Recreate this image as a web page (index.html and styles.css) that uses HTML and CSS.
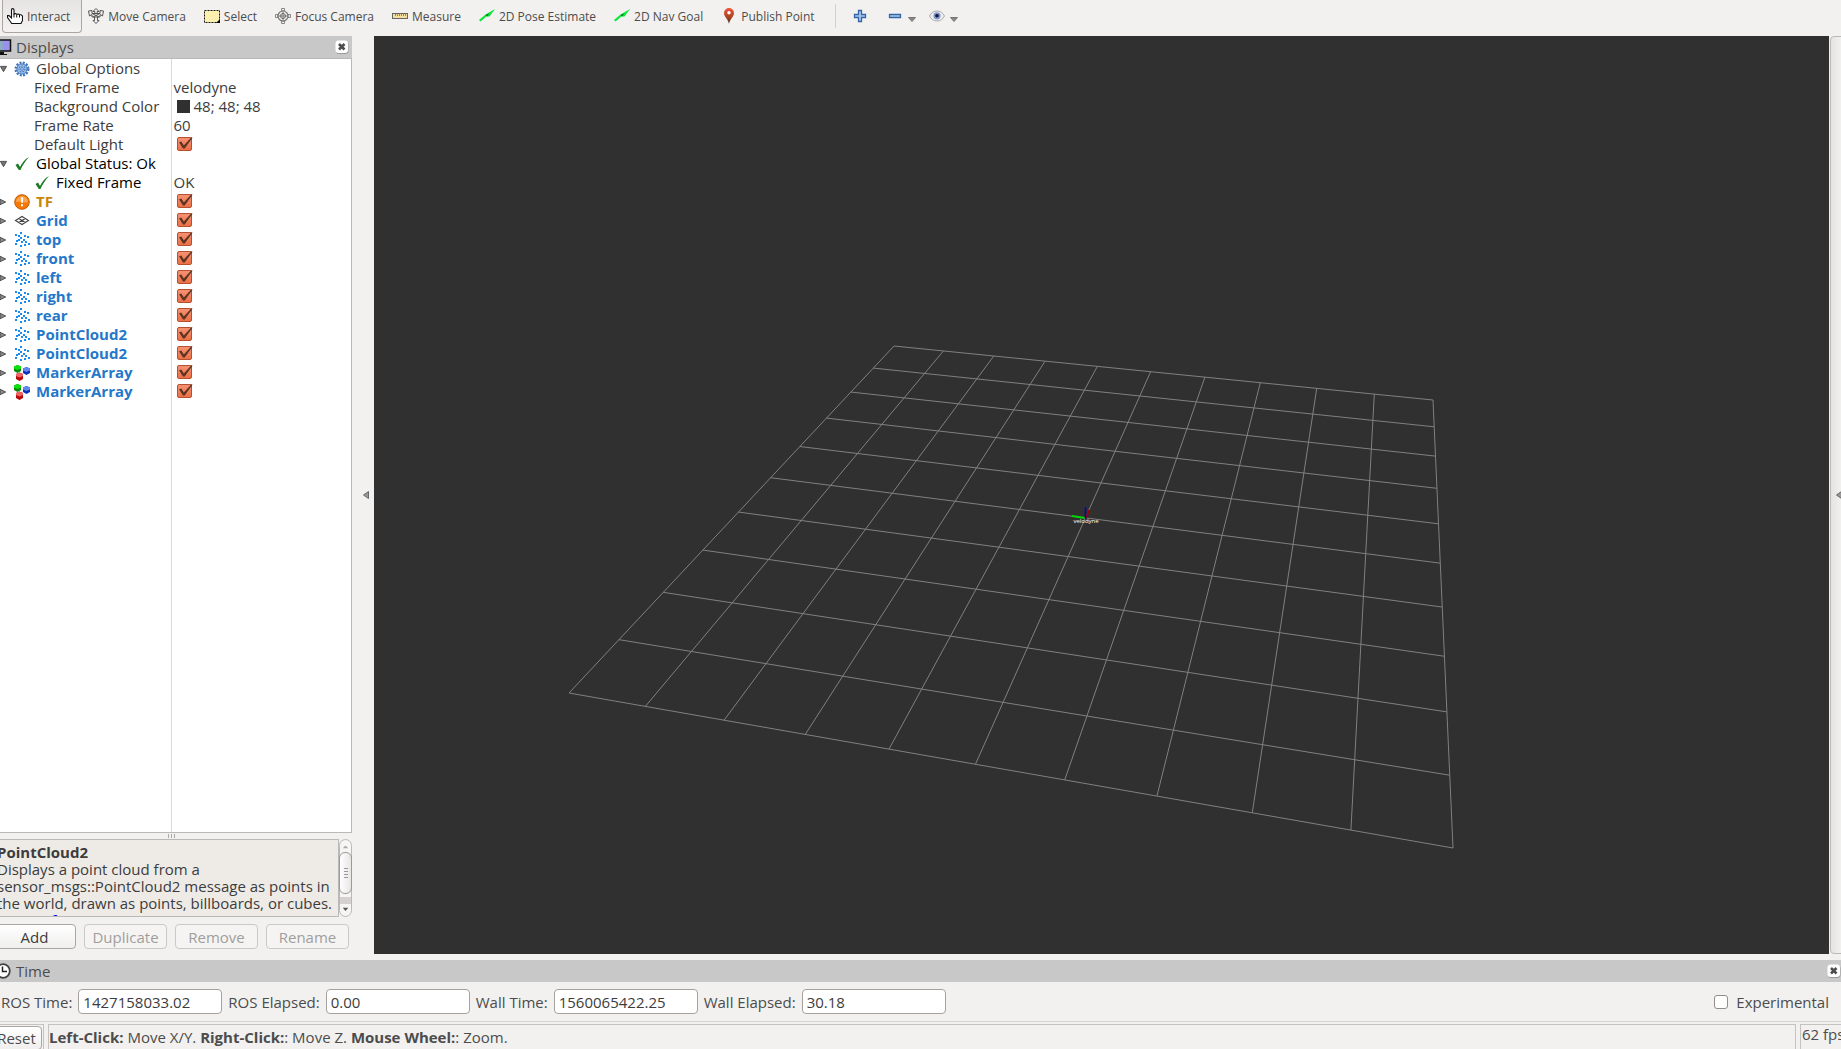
FILE: index.html
```html
<!DOCTYPE html>
<html lang="en">
<head>
    <meta charset="UTF-8">
    <meta name="viewport" content="width=device-width, initial-scale=1.0">
    <title>RViz</title>
    <link rel="stylesheet" href="styles.css">
</head>
<body>
    <!-- Shared icons -->
    <svg class="sprite" aria-hidden="true">
        <symbol id="gear" viewBox="0 0 16 16">
            <circle cx="8" cy="8" r="6" fill="none" stroke="#3f74bb" stroke-width="3" stroke-dasharray="1.9 1.24"/>
            <circle cx="8" cy="8" r="5" fill="#a6c5ec" stroke="#4a7fc4"/>
            <circle cx="8" cy="8" r="3" fill="none" stroke="#3f74bb" stroke-width="1.2" stroke-dasharray="1.6 1"/>
            <circle cx="8" cy="8" r="1.3" fill="#fff" stroke="#3f74bb"/>
        </symbol>
        <symbol id="tick" viewBox="0 0 16 16">
            <path d="M1.500 9L4 7.500l2 3.500C8 7 11 3 15 1 11.500 5 8.500 9 6.500 14H4.800z" fill="#1d7a24"/>
        </symbol>
        <symbol id="warn" viewBox="0 0 16 16">
            <circle cx="8" cy="8" r="7.300" fill="#f57900" stroke="#c65a00"/>
            <path d="M2 8a6 6 0 0 1 12 0C10 9.500 6 7 2 8z" fill="#fba550"/>
            <path d="M7 3.500h2.200L8.800 9H7.400zM7 10.300h2v2H7z" fill="#fff"/>
        </symbol>
        <symbol id="grid" viewBox="0 0 16 16">
            <path d="M1.500 7.500L8 3.500l6.500 4-6.500 4zM4.700 5.500l6.600 4M11.300 5.500l-6.600 4" fill="none" stroke="#444" stroke-width="1.100"/>
        </symbol>
        <symbol id="cloud" viewBox="0 0 16 16">
            <path d="M6 0h2v2H6zM1 2h2v2H1zM4 3h2v2H4zM10 3h2v2h-2zM13 4h2v2h-2zM6 5h2v2H6zM2 8h2v2H2zM4 7h2v2H4zM9 7h2v2H9zM7 9h2v2H7zM11 9h2v2h-2zM14 11h2v2h-2zM1 11h2v2H1zM6 13h2v2H6zM10 12h2v2h-2z" fill="#1a8cf0" shape-rendering="crispEdges"/>
        </symbol>
        <symbol id="markers" viewBox="0 0 16 16">
            <path d="M0 1.500L3.500 0 7 1.500v4.500L3.500 8 0 6z" fill="#078a07"/><path d="M0 1.500L3.500 0 7 1.500v2L3.500 5 0 3.500z" fill="#0be30b"/>
            <path d="M9 3.500L12.500 2 16 3.500V8l-3.500 2L9 8z" fill="#0b2fb5"/><path d="M9 3.500L12.500 2 16 3.500v2L12.500 7 9 5.500z" fill="#6286f5"/>
            <path d="M2 9L5.500 7.500 9 9v5l-3.500 2L2 14z" fill="#b80808"/><path d="M2 9L5.500 7.500 9 9v2l-3.500 1.500L2 11z" fill="#ef6464"/>
        </symbol>
        <symbol id="arrow" viewBox="0 0 16 16">
            <path d="M0 12L6.500 6.500 16 1l-5.500 7.500H7.500L1.500 13.500z" fill="#0be83a"/>
            <path d="M6.500 7l3.500-1.500L8.500 8.500z" fill="#087a1e"/>
        </symbol>
        <symbol id="close" viewBox="0 0 14 14">
            <rect x="1" y="1.500" width="12.500" height="12.500" rx="3" fill="#999"/>
            <rect x=".5" y=".5" width="12.500" height="12.500" rx="3" fill="#fff"/>
            <path d="M4 4l5.500 5.500M9.500 4L4 9.500" stroke="#4c4c4c" stroke-width="2.600"/>
        </symbol>
        <symbol id="open" viewBox="0 0 8 8"><path d="M.5 1h7L4 7z" fill="#777" stroke="#444"/></symbol>
        <symbol id="drop" viewBox="0 0 8 8"><path d="M.5 2.500h7L4 6.500z" fill="#888" stroke="#777"/></symbol>
        <symbol id="shut" viewBox="0 0 8 8"><path d="M0 .8L6.500 4 0 7.200z" fill="#888" stroke="#444"/></symbol>
    </svg>

    <header class="toolbar">
        <button class="tool active">
            <svg class="icon" viewBox="0 0 16 16"><path d="M4.500 10V1.700Q4.500.6 5.700.6T7 1.700V6l1.500-.4 1.200.6 1.600-.2 1.200.7 1.500 0 1.500 1.300v4.500L14 15.500H4.700L3 13 .5 9.500V7.600L2 7.500z" fill="#fff" stroke="#111" stroke-width="1.100"/><path d="M7 6v3.500M9.700 6.500v3M12.500 7v2.500" stroke="#111"/></svg>
            Interact
        </button>
        <button class="tool">
            <svg class="icon" viewBox="0 0 16 16"><path d="M8 .5l3 3H9.200V6M8 .5l-3 3h1.800V6M.5 3l3.500-.5v3h8v-3l3.500.5-1 5-2.500-1.500V9H4V6.500L1.500 8zM8 15.500l-3-3h1.500V9M8 15.500l3-3H9.500V9M5 6l6 3M11 6L5 9" fill="none" stroke="#555"/></svg>
            Move Camera
        </button>
        <button class="tool">
            <svg class="icon" viewBox="0 0 16 16"><rect x=".5" y="2.500" width="15" height="12" fill="#fcf0ae" stroke="#111" stroke-dasharray="2 1"/><path d="M16 11v4h-4z" fill="#000"/></svg>
            Select
        </button>
        <button class="tool">
            <svg class="icon" viewBox="0 0 16 16"><path d="M6.500 3V.5h3V3M6.500 13v2.500h3V13M3 6.500H.5v3H3M13 6.500h2.500v3H13" fill="none" stroke="#888"/><circle cx="8" cy="8" r="5" fill="none" stroke="#777" stroke-width="1.200"/><path d="M8 2v12M2 8h12" stroke="#777"/><circle cx="8" cy="8" r="2.500" fill="none" stroke="#666"/></svg>
            Focus Camera
        </button>
        <button class="tool">
            <svg class="icon" viewBox="0 0 16 16"><rect x=".5" y="5.500" width="15" height="5" fill="#f3dfa0" stroke="#666"/><path d="M3.500 6v2M5.500 6v2M7.500 6v2M9.500 6v2M11.500 6v2M13.500 6v2" stroke="#888"/></svg>
            Measure
        </button>
        <button class="tool"><svg class="icon"><use href="#arrow"/></svg>2D Pose Estimate</button>
        <button class="tool"><svg class="icon"><use href="#arrow"/></svg>2D Nav Goal</button>
        <button class="tool">
            <svg class="icon" viewBox="0 0 16 16"><defs><linearGradient id="pin" x2="0" y2="1"><stop stop-color="#f0553a"/><stop offset=".6" stop-color="#a8421f"/><stop offset="1" stop-color="#3c2a18"/></linearGradient></defs><path d="M8 16C7.500 11.500 3 9 3 5a5 5 0 0 1 10 0c0 4-4.500 6.500-5 11z" fill="url(#pin)"/><circle cx="8" cy="4.800" r="1.700" fill="#fff"/></svg>
            Publish Point
        </button>
        <span class="separator"></span>
        <button class="tool small" aria-label="Add tool">
            <svg class="icon" viewBox="0 0 16 16"><path d="M6.500 2.500h3v4h4v3h-4v4h-3v-4h-4v-3h4z" fill="#a9c8ee" stroke="#3465a4" stroke-width="1.300"/></svg>
        </button>
        <button class="tool small" aria-label="Remove tool">
            <svg class="icon" viewBox="0 0 16 16"><path d="M2.500 6.500h11v3h-11z" fill="#a9c8ee" stroke="#3465a4" stroke-width="1.300"/></svg>
            <svg class="caret"><use href="#drop"/></svg>
        </button>
        <button class="tool small" aria-label="Visibility">
            <svg class="icon" viewBox="0 0 16 16"><path d="M.5 8Q3 3 8 3t7.500 5Q13 13 8 13T.5 8z" fill="#eee" stroke="#aaa"/><circle cx="8" cy="7.800" r="3.600" fill="#8095cf"/><circle cx="8" cy="7.800" r="1.800" fill="#14182c"/></svg>
            <svg class="caret"><use href="#drop"/></svg>
        </button>
    </header>

    <main class="workspace">
        <section class="displays">
            <div class="dock-title">
                <svg class="title-icon" viewBox="0 0 16 16"><defs><linearGradient id="screen"><stop offset=".3" stop-color="#76d58a"/><stop offset=".7" stop-color="#9a92e8"/></linearGradient></defs><rect x="-6" y="1" width="20.500" height="11" fill="url(#screen)" stroke="#111" stroke-width="1.500"/><path d="M3 13h5v2H3zM0 15h11v1H0z" fill="#111"/></svg>
                Displays
                <button class="close" aria-label="Close Displays"><svg><use href="#close"/></svg></button>
            </div>
            <div class="tree">
                <table>
                    <tbody>
                        <tr><td><div class="name"><svg class="twist"><use href="#open"/></svg><svg class="row-icon"><use href="#gear"/></svg>Global Options</div></td><td></td></tr>
                        <tr><td><div class="name prop">Fixed Frame</div></td><td>velodyne</td></tr>
                        <tr><td><div class="name prop">Background Color</div></td><td><span class="swatch"></span>48; 48; 48</td></tr>
                        <tr><td><div class="name prop">Frame Rate</div></td><td>60</td></tr>
                        <tr><td><div class="name prop"><label for="light">Default Light</label></div></td><td><input type="checkbox" class="check" id="light" checked></td></tr>
                        <tr><td><div class="name status"><svg class="twist"><use href="#open"/></svg><svg class="row-icon"><use href="#tick"/></svg>Global Status: Ok</div></td><td></td></tr>
                        <tr><td><div class="name status nested"><svg class="row-icon"><use href="#tick"/></svg>Fixed Frame</div></td><td>OK</td></tr>
                        <tr><td><div class="name display warning"><svg class="twist"><use href="#shut"/></svg><svg class="row-icon"><use href="#warn"/></svg><label for="d1">TF</label></div></td><td><input type="checkbox" class="check" id="d1" checked></td></tr>
                        <tr><td><div class="name display"><svg class="twist"><use href="#shut"/></svg><svg class="row-icon"><use href="#grid"/></svg><label for="d2">Grid</label></div></td><td><input type="checkbox" class="check" id="d2" checked></td></tr>
                        <tr><td><div class="name display"><svg class="twist"><use href="#shut"/></svg><svg class="row-icon"><use href="#cloud"/></svg><label for="d3">top</label></div></td><td><input type="checkbox" class="check" id="d3" checked></td></tr>
                        <tr><td><div class="name display"><svg class="twist"><use href="#shut"/></svg><svg class="row-icon"><use href="#cloud"/></svg><label for="d4">front</label></div></td><td><input type="checkbox" class="check" id="d4" checked></td></tr>
                        <tr><td><div class="name display"><svg class="twist"><use href="#shut"/></svg><svg class="row-icon"><use href="#cloud"/></svg><label for="d5">left</label></div></td><td><input type="checkbox" class="check" id="d5" checked></td></tr>
                        <tr><td><div class="name display"><svg class="twist"><use href="#shut"/></svg><svg class="row-icon"><use href="#cloud"/></svg><label for="d6">right</label></div></td><td><input type="checkbox" class="check" id="d6" checked></td></tr>
                        <tr><td><div class="name display"><svg class="twist"><use href="#shut"/></svg><svg class="row-icon"><use href="#cloud"/></svg><label for="d7">rear</label></div></td><td><input type="checkbox" class="check" id="d7" checked></td></tr>
                        <tr><td><div class="name display"><svg class="twist"><use href="#shut"/></svg><svg class="row-icon"><use href="#cloud"/></svg><label for="d8">PointCloud2</label></div></td><td><input type="checkbox" class="check" id="d8" checked></td></tr>
                        <tr><td><div class="name display"><svg class="twist"><use href="#shut"/></svg><svg class="row-icon"><use href="#cloud"/></svg><label for="d9">PointCloud2</label></div></td><td><input type="checkbox" class="check" id="d9" checked></td></tr>
                        <tr><td><div class="name display"><svg class="twist"><use href="#shut"/></svg><svg class="row-icon"><use href="#markers"/></svg><label for="d10">MarkerArray</label></div></td><td><input type="checkbox" class="check" id="d10" checked></td></tr>
                        <tr><td><div class="name display"><svg class="twist"><use href="#shut"/></svg><svg class="row-icon"><use href="#markers"/></svg><label for="d11">MarkerArray</label></div></td><td><input type="checkbox" class="check" id="d11" checked></td></tr>
                        <tr class="filler"><td></td><td></td></tr>
                    </tbody>
                </table>
            </div>
            <div class="splitter"><i></i><i></i><i></i></div>
            <div class="help">
                <div class="help-text">
                    <b>PointCloud2</b><br>
                    Displays a point cloud from a<br>
                    sensor_msgs::PointCloud2 message as points in<br>
                    the world, drawn as points, billboards, or cubes.<br>
                    <a href="#">More Information</a>.
                </div>
                <div class="scroll">
                    <svg class="scroll-arrow" viewBox="0 0 12 12"><path d="M3 8.500h6L6 5.500z" fill="#aaa"/></svg>
                    <div class="thumb"><i></i><i></i><i></i><i></i></div>
                    <svg class="scroll-arrow" viewBox="0 0 12 12"><path d="M3 3.500h6L6 7z" fill="#555"/></svg>
                </div>
            </div>
            <div class="actions">
                <button class="button">Add</button>
                <button class="button" disabled>Duplicate</button>
                <button class="button" disabled>Remove</button>
                <button class="button" disabled>Rename</button>
            </div>
        </section>

        <button class="collapse" aria-label="Hide left panel"><svg viewBox="0 0 6 8"><path d="M5.500.500v7L.5 4z" fill="#999" stroke="#666"/></svg></button>

        <div class="view">
            <svg id="scene" viewBox="0 0 1455 918">
                <g id="lines" stroke="#808080" stroke-width="1"></g>
                <path d="M698 480L711 482" stroke="#00d800" stroke-width="2"/>
                <path d="M712 482L715 474" stroke="#a00000" stroke-width="2"/>
                <path d="M711.500 483V471" stroke="#0000c8" stroke-width="1.500"/>
                <text x="712" y="487" class="frame-name">velodyne</text>
            </svg>
        </div>

        <button class="collapse right" aria-label="Show right panel"><svg viewBox="0 0 6 8"><path d="M5.500.500v7L.5 4z" fill="#999" stroke="#666"/></svg></button>
    </main>

    <section class="time">
        <div class="dock-title">
            <svg class="title-icon" viewBox="0 0 16 16"><circle cx="7" cy="8" r="6.800" fill="#fff" stroke="#444" stroke-width="1.800"/><path d="M6.500 3.500V8.500H11" fill="none" stroke="#222" stroke-width="1.500"/></svg>
            Time
            <button class="close" aria-label="Close Time"><svg><use href="#close"/></svg></button>
        </div>
        <form class="clock">
            <label for="ros-time">ROS Time:</label><input type="text" id="ros-time" value="1427158033.02">
            <label for="ros-elapsed">ROS Elapsed:</label><input type="text" id="ros-elapsed" value="0.00">
            <label for="wall-time">Wall Time:</label><input type="text" id="wall-time" value="1560065422.25">
            <label for="wall-elapsed">Wall Elapsed:</label><input type="text" id="wall-elapsed" value="30.18">
            <span class="experimental"><input type="checkbox" class="box" id="experimental"><label for="experimental">Experimental</label></span>
        </form>
    </section>

    <footer class="statusbar">
        <div class="reset-frame"><button class="button reset">Reset</button></div>
        <div class="hint"><b>Left-Click:</b> Move X/Y. <b>Right-Click:</b>: Move Z. <b>Mouse Wheel:</b>: Zoom.</div>
        <div class="fps">62 fps</div>
    </footer>

    <script src="script.js"></script>
</body>
</html>
```

FILE: styles.css
```css
* {
    box-sizing: border-box;
}

body {
    margin: 0;
    height: 100vh;
    display: flex;
    flex-direction: column;
    overflow: hidden;
    background-color: #f2f1f0;
    color: #3c3c3c;
    font-family: "Open Sans", "Noto Sans", sans-serif;
    font-size: 15px;
}

button, input {
    font: inherit;
    color: inherit;
}

.sprite {
    display: none;
}

/* Toolbar */
.toolbar {
    display: flex;
    flex: none;
    align-items: flex-start;
    height: 36px;
    padding-left: 2px;
    gap: 1px;
    font-size: 12px;
    color: #4c4c4c;
}

.tool {
    display: flex;
    align-items: center;
    gap: 4px;
    height: 33px;
    padding: 0 11px 0 4px;
    border: 1px solid transparent;
    border-top: none;
    border-radius: 0 0 4px 4px;
    background: none;
    white-space: nowrap;
}

.tool.active {
    border-color: #aaa6a1;
    background-image: linear-gradient(#e6e4e2, #f4f3f2);
}

.tool.small {
    padding: 0 4px 0 5px;
    margin-left: 7px;
}

.icon {
    width: 16px;
    height: 16px;
    flex: none;
}

.caret {
    width: 8px;
    height: 8px;
    margin: 6px -6px 0 1px;
}

.separator {
    width: 1px;
    height: 24px;
    margin: 4px 2px 0 7px;
    background-color: #d2d0ce;
}

/* Docks */
.workspace {
    display: flex;
    flex: 1;
    min-height: 0;
}

.displays {
    display: flex;
    flex-direction: column;
    width: 352px;
    min-height: 0;
}

.dock-title {
    display: flex;
    flex: none;
    align-items: center;
    height: 22px;
    padding-right: 3px;
    background-color: #c8c8c8;
    color: #4c4c4c;
}

.title-icon {
    width: 16px;
    height: 16px;
    margin-left: -4px;
    margin-right: 4px;
}

.close {
    display: flex;
    margin-left: auto;
    padding: 0;
    border: none;
    background: none;
}

.close svg {
    width: 14px;
    height: 14px;
}

.tree {
    flex: 1;
    min-height: 0;
    border: 1px solid #bbb9b7;
    border-left: none;
    background-color: #fff;
}

.tree table {
    width: 100%;
    height: 100%;
    border-collapse: collapse;
    table-layout: fixed;
}

.tree td {
    height: 19px;
    padding: 0 0 0 2px;
    line-height: 19px;
    white-space: nowrap;
}

.tree td:first-child {
    width: 171px;
    padding: 0;
    border-right: 1px solid #d9d9d9;
}

.tree .filler td {
    height: 100%;
}

.name {
    display: flex;
    align-items: center;
    height: 19px;
}

.twist {
    width: 7px;
    height: 8px;
    margin-right: 7px;
}

.row-icon {
    width: 16px;
    height: 16px;
    margin-right: 6px;
}

.prop {
    padding-left: 34px;
}

.status {
    color: #000;
}

.nested {
    padding-left: 34px;
}

.display {
    color: #2477c9;
    font-weight: bold;
}

.warning {
    color: #c8870a;
}

.swatch {
    display: inline-block;
    width: 13px;
    height: 13px;
    margin: 0 4px 0 3px;
    vertical-align: -1px;
    background-color: #303030;
}

.check {
    appearance: none;
    display: block;
    position: relative;
    width: 15px;
    height: 14px;
    margin: 0 0 1px 3px;
    border: 1px solid #b5512e;
    border-radius: 2px;
    background-image: linear-gradient(#f59273, #ec7047);
}

.check:checked::before {
    content: "";
    position: absolute;
    left: 1px;
    top: -1px;
    width: 14px;
    height: 12px;
    background-color: #5d3322;
    clip-path: polygon(4% 44%, 20% 38%, 38% 70%, 94% 0, 100% 6%, 44% 96%, 32% 96%);
}

.check:not(:checked) {
    background: #fff;
}

.splitter {
    display: flex;
    flex: none;
    justify-content: center;
    align-items: center;
    gap: 2px;
    height: 6px;
    padding-right: 9px;
}

.splitter i {
    width: 1px;
    height: 4px;
    background-color: #aaa;
}

.help {
    display: flex;
    flex: none;
    height: 78px;
}

.help-text {
    flex: 1;
    margin-left: -7px;
    padding: 4px 0 0 3px;
    overflow: hidden;
    border: 1px solid #bbb9b7;
    background-color: #eeebe7;
    line-height: 17px;
    white-space: nowrap;
}

.scroll {
    display: flex;
    flex-direction: column;
    width: 13px;
    border: 1px solid #bbb9b7;
    border-radius: 7px;
    background-image: linear-gradient(#f6f5f4 75%, #d4d2d0 75%, #d4d2d0 84%, #f6f5f4 84%);
}

.scroll-arrow {
    width: 11px;
    height: 12px;
}

.thumb {
    display: flex;
    flex: 1;
    flex-direction: column;
    align-items: center;
    justify-content: center;
    gap: 2px;
    margin: 0 -1px 10px;
    border: 1px solid #9c9a98;
    border-radius: 6px;
    background-image: linear-gradient(90deg, #fff, #e8e6e4);
}

.thumb i {
    width: 4px;
    height: 1px;
    background-color: #999;
}

.actions {
    display: flex;
    flex: none;
    gap: 8px;
    margin-left: -7px;
    padding: 7px 3px 11px 0;
}

.button {
    flex: 1;
    height: 25px;
    padding: 0;
    border: 1px solid #aaa6a1;
    border-radius: 4px;
    background-image: linear-gradient(#fff, #f0efee);
    line-height: 22px;
}

.button:disabled {
    border-color: #cbc9c6;
    background-image: none;
    background-color: #f5f4f3;
    color: #a09e9c;
}

.collapse {
    display: flex;
    flex: none;
    align-items: center;
    justify-content: center;
    width: 22px;
    padding: 0 0 0 6px;
    margin-bottom: 6px;
    border: none;
    background: none;
}

.collapse svg {
    width: 6px;
    height: 8px;
    flex: none;
}

.collapse.right {
    width: 16px;
    margin-left: 1px;
    margin-right: -5px;
    padding-left: 2px;
    border: 1px solid #bbb9b7;
    border-radius: 4px;
    background-image: linear-gradient(90deg, #e6e4e2, #f6f5f4);
}

/* 3D view */
.view {
    flex: 1;
    min-width: 0;
    margin-bottom: 6px;
    background-color: #303030;
}

.view svg {
    display: block;
    width: 100%;
    height: 100%;
}

.frame-name {
    fill: #fff;
    font-size: 6px;
    text-anchor: middle;
}

/* Time panel */
.time {
    flex: none;
}

.time .dock-title {
    padding-right: 0;
}

.clock {
    display: flex;
    align-items: center;
    height: 39px;
    padding: 0 12px 0 1px;
    gap: 6px;
    color: #4c4c4c;
}

.clock input[type="text"] {
    width: 144px;
    height: 25px;
    padding: 0 4px;
    border: 1px solid #a5a19c;
    border-radius: 4px;
    background-color: #fff;
    color: #3c3c3c;
}

.experimental {
    display: flex;
    align-items: center;
    gap: 8px;
    margin-left: auto;
}

.box {
    appearance: none;
    width: 14px;
    height: 14px;
    margin: 0;
    border: 1px solid #8f8c89;
    border-radius: 3px;
    background-color: #fff;
}

/* Status bar */
.statusbar {
    display: flex;
    flex: none;
    gap: 4px;
    height: 28px;
    padding-top: 2px;
    border-top: 1px solid #d6d4d2;
    line-height: 24px;
    color: #4c4c4c;
}

.reset-frame {
    display: flex;
    width: 44px;
    padding-right: 1px;
    border-top: 1px solid #c5c3c1;
    border-right: 1px solid #c5c3c1;
}

.reset {
    height: 24px;
    margin: 1px 0 0 -9px;
}

.hint {
    flex: 1;
    border: 1px solid #c5c3c1;
    border-bottom: none;
}

.fps {
    width: 41px;
    padding-left: 1px;
    overflow: hidden;
    border: 1px solid #c5c3c1;
    border-right: none;
    border-bottom: none;
    line-height: 18px;
    white-space: nowrap;
}
```

FILE: script.js
```javascript
// Ground plane: corners of the 10x10 grid, projected into the view
const corners = [[520, 310], [1059, 364], [1079, 812], [195, 657]];
const cells = 10;

// Perspective mapping of the unit square onto the four corners
function project(u, v) {
    const [[x0, y0], [x1, y1], [x2, y2], [x3, y3]] = corners;
    const dx1 = x1 - x2, dx2 = x3 - x2, sx = x0 - x1 + x2 - x3;
    const dy1 = y1 - y2, dy2 = y3 - y2, sy = y0 - y1 + y2 - y3;
    const det = dx1 * dy2 - dx2 * dy1;
    const g = (sx * dy2 - dx2 * sy) / det;
    const h = (dx1 * sy - sx * dy1) / det;
    const w = g * u + h * v + 1;
    return [
        ((x1 - x0 + g * x1) * u + (x3 - x0 + h * x3) * v + x0) / w,
        ((y1 - y0 + g * y1) * u + (y3 - y0 + h * y3) * v + y0) / w
    ];
}

function drawLine(from, to) {
    const line = document.createElementNS('http://www.w3.org/2000/svg', 'line');
    line.setAttribute('x1', from[0]);
    line.setAttribute('y1', from[1]);
    line.setAttribute('x2', to[0]);
    line.setAttribute('y2', to[1]);
    document.getElementById('lines').appendChild(line);
}

for (let i = 0; i <= cells; i++) {
    drawLine(project(i / cells, 0), project(i / cells, 1));
    drawLine(project(0, i / cells), project(1, i / cells));
}
```
